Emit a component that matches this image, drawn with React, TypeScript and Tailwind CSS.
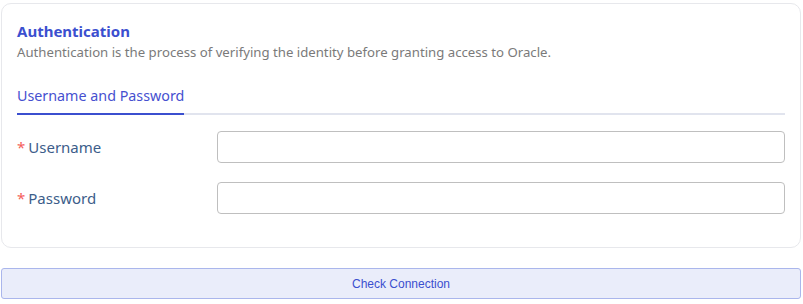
import React from "react";

const Field = ({ label, type }: { label: string; type: string }) => (
  <div className="flex items-center">
    <label className="w-[200px] shrink-0 text-[15px] text-[#3c5d8a]">
      <span className="text-[#f5605a] mr-[3px]">*</span>
      {label}
    </label>
    <input
      type={type}
      className="h-[32px] flex-1 rounded-[4px] border border-[#bfbfbf] bg-white px-2 outline-none"
    />
  </div>
);

const App = () => {
  return (
    <main className="w-[803px] h-[304px] bg-white px-[1px] pt-[3px]" style={{ fontFamily: '"Noto Sans", "Open Sans", sans-serif' }}>
      <section className="w-[800px] h-[245px] rounded-[10px] border border-[#e7e8ec] pl-[15px] pr-[15px] pt-[17px]">
        <h2 className="text-[15px] leading-[20px] font-bold text-[#3b4fcf]">Authentication</h2>
        <p className="mt-[2px] text-[13.2px] leading-[18px] text-[#7a7a7a]">
          Authentication is the process of verifying the identity before granting access to Oracle.
        </p>
        <div className="mt-[25px] flex border-b-2 border-[#e1e4ee]">
          <div className="-mb-[2px] border-b-2 border-[#3b4fcf] pb-[7px] text-[14.3px] leading-[20px] text-[#4650d0]">
            Username and Password
          </div>
        </div>
        <div className="mt-[16px] flex flex-col gap-[19px]">
          <Field label="Username" type="text" />
          <Field label="Password" type="password" />
        </div>
      </section>
      <button
        className="mt-[20px] h-[31px] w-[800px] rounded-[3px] border border-[#aab6ec] bg-[#eaedfa] text-[12px] text-[#3b4fcf]"
        style={{ fontFamily: '"Liberation Sans", Arial, sans-serif' }}
      >
        Check Connection
      </button>
    </main>
  );
};

export default App;
